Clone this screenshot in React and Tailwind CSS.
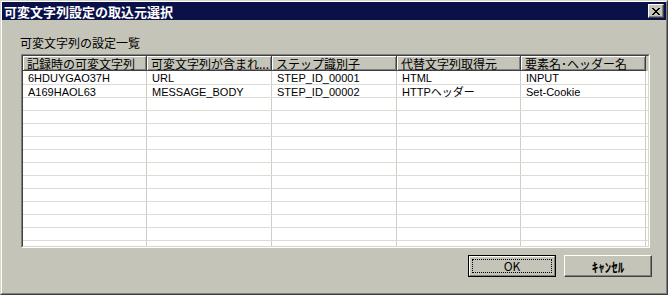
import React from 'react';

const columns = [
  { label: '記録時の可変文字列', w: 'w-[124px]' },
  { label: '可変文字列が含まれ...', w: 'w-[125px]' },
  { label: 'ステップ識別子', w: 'w-[125px]' },
  { label: '代替文字列取得元', w: 'w-[124px]' },
  { label: '要素名･ヘッダー名', w: 'w-[125px]' },
];

const rows = [
  ['6HDUYGAO37H', 'URL', 'STEP_ID_00001', 'HTML', 'INPUT'],
  ['A169HAOL63', 'MESSAGE_BODY', 'STEP_ID_00002', 'HTTPヘッダー', 'Set-Cookie'],
];

const EMPTY_ROWS = 12;

function CloseGlyph() {
  const px = [
    [0, 0, 2], [6, 0, 2],
    [1, 1, 2], [5, 1, 2],
    [2, 2, 4],
    [3, 3, 2],
    [2, 4, 4],
    [1, 5, 2], [5, 5, 2],
    [0, 6, 2], [6, 6, 2],
  ];
  return (
    <svg width="8" height="7" viewBox="0 0 8 7" shapeRendering="crispEdges">
      {px.map(([x, y, w], i) => (
        <rect key={i} x={x} y={y} width={w} height="1" fill="#000" />
      ))}
    </svg>
  );
}

function HeaderCell({ label, w }) {
  return (
    <div
      className={`${w} h-[15px] shrink-0 flex items-center pl-[4px] overflow-hidden whitespace-nowrap border-r border-b border-[#404040] shadow-[inset_1px_1px_0_#ffffff,inset_-1px_-1px_0_#808080] text-[12px] leading-[15px]`}
    >
      {label}
    </div>
  );
}

function Row({ cells, first }) {
  return (
    <div className={`flex ${first ? 'h-[14px]' : 'h-[13px]'} border-b border-[#dddcd4]`}>
      {columns.map((c, i) => (
        <div
          key={i}
          className={`${c.w} shrink-0 pl-[5px] pt-[1px] border-r border-[#cfcec6] whitespace-nowrap font-['Liberation_Sans','Noto_Sans_CJK_JP',sans-serif] text-[11px] leading-[12px]`}
        >
          {cells ? cells[i] : ''}
        </div>
      ))}
    </div>
  );
}

function Button({ children, isDefault }) {
  if (isDefault) {
    return (
      <div className="w-[88px] h-[22px] border border-black">
        <div className="h-full border-t border-l border-white border-r border-b border-r-[#808080] border-b-[#808080] p-[2px]">
          <div className="h-full border border-dotted border-black flex items-center justify-center text-[12px] leading-none">
            {children}
          </div>
        </div>
      </div>
    );
  }
  return (
    <div className="w-[88px] h-[22px] border-t border-l border-white border-r border-b border-r-[#404040] border-b-[#404040] shadow-[inset_-1px_-1px_0_#808080] flex items-center justify-center text-[13px] font-bold leading-none">
      {children}
    </div>
  );
}

export default function App() {
  return (
    <div className="w-[668px] h-[295px] bg-[#c5c4b8] font-['Noto_Sans_CJK_JP',sans-serif] text-black border-t border-l border-[#d8d7cc] border-r border-b border-r-[#404040] border-b-[#404040]">
      <div className="h-full border-t border-l border-white border-r border-b border-r-[#808080] border-b-[#808080] flex flex-col">
        {/* title bar */}
        <div className="h-[18px] bg-[#0a1048] flex items-center justify-between pl-[2px] pr-[2px]">
          <span className="text-white font-bold text-[13px] leading-none">可変文字列設定の取込元選択</span>
          <div className="w-[16px] h-[14px] bg-[#c5c4b8] border-t border-l border-white border-r border-b border-r-[#404040] border-b-[#404040] shadow-[inset_-1px_-1px_0_#808080] flex items-center justify-center">
            <CloseGlyph />
          </div>
        </div>

        <div className="pl-[18px] pt-[15px]">
          <div className="text-[12px] leading-[16px]">可変文字列の設定一覧</div>

          {/* list view */}
          <div className="mt-[3px] ml-[1px] w-[629px] h-[194px] border-t border-l border-[#808080] border-r border-b border-r-white border-b-white">
            <div className="h-full border-t border-l border-[#404040] border-r border-b border-r-[#d8d7cc] border-b-[#d8d7cc] bg-white overflow-hidden">
              <div className="flex bg-[#c5c4b8]">
                {columns.map((c) => (
                  <HeaderCell key={c.label} {...c} />
                ))}
              </div>
              {rows.map((r, i) => (
                <Row key={i} cells={r} first={i === 0} />
              ))}
              {Array.from({ length: EMPTY_ROWS }).map((_, i) => (
                <Row key={`e${i}`} />
              ))}
            </div>
          </div>
        </div>

        <div className="flex justify-end gap-[8px] mt-[7px] pr-[14px]">
          <Button isDefault>OK</Button>
          <Button>ｷｬﾝｾﾙ</Button>
        </div>
      </div>
    </div>
  );
}
